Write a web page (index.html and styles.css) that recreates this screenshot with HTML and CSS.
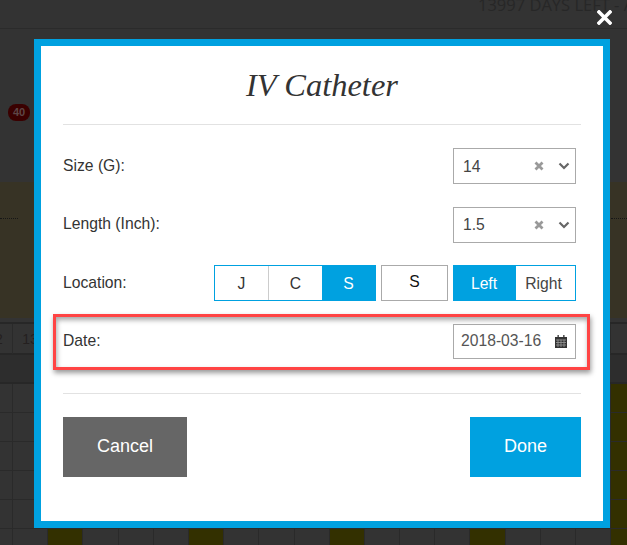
FILE: index.html
```html
<!DOCTYPE html>
<html lang="en">
<head>
<meta charset="utf-8">
<title>IV Catheter</title>
<link rel="stylesheet" href="styles.css">
</head>
<body>
<div class="page">
  <div class="topbar"><span class="days">13997 DAYS LEFT - ADMIT</span></div>
  <div class="subbar"><span class="badge">40</span></div>
  <div class="band">
    <div class="dots"><i class="dot-left"></i><i class="dot-right"></i></div>
  </div>
  <div class="band-gap"></div>
  <div class="grid-head">
    <span>12</span><span>13</span><span></span><span></span><span></span><span></span><span></span><span></span><span></span>
    <span></span><span></span><span></span><span></span><span></span><span></span><span></span><span></span><span></span><span></span>
  </div>
  <div class="grid-sub"></div>
  <div class="grid-body">
    <i></i><i></i><i class="olive"></i><i></i><i></i><i></i><i class="olive"></i><i></i><i></i>
    <i></i><i class="olive"></i><i></i><i></i><i></i><i class="olive"></i><i></i><i></i><i></i>
    <i class="olive"></i>
  </div>

  <svg class="close" viewBox="0 0 15 15" width="15" height="15" aria-label="Close">
    <path d="M2 2 13 13M13 2 2 13" stroke="#fff" stroke-width="3.6" stroke-linecap="square" fill="none"/>
  </svg>

  <section class="modal">
    <h2 class="title">IV Catheter</h2>
    <div class="form">
      <div class="row">
        <label class="label">Size (G):</label>
        <div class="select">
          <span class="value">14</span>
          <svg class="clear" viewBox="0 0 10 10" width="10" height="10"><path d="M1.500 1.500 8.500 8.500M8.500 1.500 1.500 8.500" stroke="#999" stroke-width="2.800" fill="none"/></svg>
          <svg class="chev" viewBox="0 0 12 8" width="12" height="8"><path d="M1.500 1.500 6 6 10.500 1.500" stroke="#666" stroke-width="2.200" fill="none"/></svg>
        </div>
      </div>
      <div class="row">
        <label class="label">Length (Inch):</label>
        <div class="select">
          <span class="value">1.5</span>
          <svg class="clear" viewBox="0 0 10 10" width="10" height="10"><path d="M1.500 1.500 8.500 8.500M8.500 1.500 1.500 8.500" stroke="#999" stroke-width="2.800" fill="none"/></svg>
          <svg class="chev" viewBox="0 0 12 8" width="12" height="8"><path d="M1.500 1.500 6 6 10.500 1.500" stroke="#666" stroke-width="2.200" fill="none"/></svg>
        </div>
      </div>
      <div class="row">
        <label class="label">Location:</label>
        <div class="controls">
          <div class="toggle toggle-jcs">
            <span class="opt opt-div">J</span><span class="opt">C</span><span class="opt on">S</span>
          </div>
          <div class="single">S</div>
          <div class="toggle toggle-lr">
            <span class="opt on opt-left">Left</span><span class="opt opt-right">Right</span>
          </div>
        </div>
      </div>
      <div class="row row-date">
        <label class="label">Date:</label>
        <div class="date">
          <span>2018-03-16</span>
          <svg class="cal" viewBox="0 0 12 13" width="12" height="13">
            <path d="M0 2H12V13H0Z" fill="#333"/>
            <path d="M2.500 0H3.800V3H2.500ZM8.200 0H9.500V3H8.200Z" fill="#333"/>
            <path d="M1 5H11M1 7.500H11M1 10H11M3 4.500V12M6 4.500V12M9 4.500V12" stroke="#999" stroke-width=".8" fill="none"/>
          </svg>
        </div>
        <div class="highlight"></div>
      </div>
    </div>
    <div class="actions">
      <button class="btn btn-cancel">Cancel</button>
      <button class="btn btn-done">Done</button>
    </div>
  </section>
</div>
</body>
</html>
```
FILE: styles.css
```css
* { box-sizing: border-box; }
html, body { margin: 0; padding: 0; }
body { font-family: "Liberation Sans", Arial, sans-serif; background: #333; }

.page {
  position: relative;
  width: 627px;
  height: 545px;
  overflow: hidden;
  background: #333;
}

/* dimmed page behind the dialog */
.topbar {
  height: 29px;
  border-bottom: 1px solid #2b2b2b;
  padding-left: 478px;
  overflow: hidden;
}
.days {
  display: block;
  margin-top: -7px;
  font: 500 16.5px/24px "Open Sans", sans-serif;
  color: #272727;
  white-space: nowrap;
}
.subbar { height: 153px; padding: 75px 0 0 8px; }
.badge {
  display: block;
  width: 22px;
  height: 17px;
  border-radius: 8px;
  background: #3a0000;
  color: #5d4646;
  font-size: 11px;
  font-weight: 700;
  line-height: 17px;
  text-align: center;
}
.band { height: 136px; background: #373325; padding-top: 36px; }
.dots { display: flex; justify-content: space-between; }
.dots i { display: block; height: 1px; border-top: 1px dotted #161616; }
.dot-left { width: 18px; }
.dot-right { width: 16px; }
.band-gap { height: 4px; }

.grid-head, .grid-body {
  display: grid;
  grid-template-columns: repeat(19, 35.2px);
  margin-left: -22.2px;
}
.grid-head { height: 31px; border-top: 2px solid #272727; }
.grid-head span {
  border-right: 1px solid #2a2a2a;
  text-align: center;
  font-size: 14px;
  line-height: 30px;
  color: #242020;
}
.grid-sub {
  height: 29px;
  background: #2d2d2d;
  border-top: 2px solid #272727;
}
.grid-body { height: 163px; border-top: 2px solid #272727; }
.grid-body i {
  display: block;
  border-right: 1px solid #2a2a2a;
  background: repeating-linear-gradient(#333 0 28px, #2a2a2a 28px 29px);
}
.grid-body i.olive {
  background: repeating-linear-gradient(#333000 0 28px, #2a2a2a 28px 29px);
}

.close { position: absolute; left: 597px; top: 10px; }

/* dialog */
.modal {
  position: absolute;
  left: 34px;
  top: 39px;
  width: 576px;
  height: 489px;
  border: 7px solid #00a1e0;
  background: #fff;
  padding: 0 22px;
  color: #333;
  font-size: 15.7px;
}
.title {
  margin: 0;
  height: 79px;
  border-bottom: 1px solid #e2e2e2;
  padding-top: 19px;
  text-align: center;
  font: italic 400 32.5px/41px "Liberation Serif", Georgia, serif;
  color: #333;
}
.form {
  display: flex;
  flex-direction: column;
  gap: 22.5px;
  padding: 23px 5px 34px 0;
  border-bottom: 1px solid #e2e2e2;
}
.row { position: relative; display: flex; justify-content: space-between; align-items: center; height: 36px; }
.label { padding-bottom: 1px; }

.select {
  position: relative;
  display: flex;
  align-items: center;
  width: 123px;
  height: 36px;
  border: 1px solid #aaa;
  padding: 0 4px 0 9px;
  color: #444;
}
.value { flex: 1; padding-top: 1px; }
.clear { margin-right: 6px; }
.chev { margin-left: 8px; margin-right: 1px; }

.controls { display: flex; gap: 5px; }
.toggle { display: flex; height: 36px; border: 1px solid #00a1e0; }
.toggle-jcs { width: 162px; }
.toggle-lr { width: 123px; }
.opt { display: flex; flex: 1; align-items: center; justify-content: center; padding-top: 1px; color: #333; }
.opt-div { border-right: 1px solid #ccc; }
.opt.on { background: #00a1e0; color: #fff; }
.opt-left { flex: 0 0 62px; padding-right: 2px; }
.opt-right { padding-right: 4px; color: #444; }
.single {
  display: flex;
  align-items: center;
  justify-content: center;
  width: 67px;
  height: 36px;
  padding-bottom: 2px;
  border: 1px solid #aaa;
  color: #111;
}

.row-date { height: 35px; }
.date {
  display: flex;
  align-items: center;
  justify-content: space-between;
  width: 123px;
  height: 35px;
  border: 1px solid #aaa;
  padding: 0 8px 0 7px;
  color: #555;
}
.highlight {
  position: absolute;
  left: -10px;
  right: -14px;
  top: -10px;
  bottom: -11px;
  border: 3px solid #ff4444;
  box-shadow: 1px 3px 5px rgba(0, 0, 0, .4), inset 1px 3px 5px rgba(0, 0, 0, .35);
  pointer-events: none;
}

.actions { display: flex; justify-content: space-between; padding-top: 23px; }
.btn {
  height: 60px;
  border: 0;
  padding: 0;
  color: #fff;
  font: 18px "Liberation Sans", Arial, sans-serif;
}
.btn-cancel { width: 124px; background: #666; }
.btn-done { width: 111px; background: #00a1e0; }
```
